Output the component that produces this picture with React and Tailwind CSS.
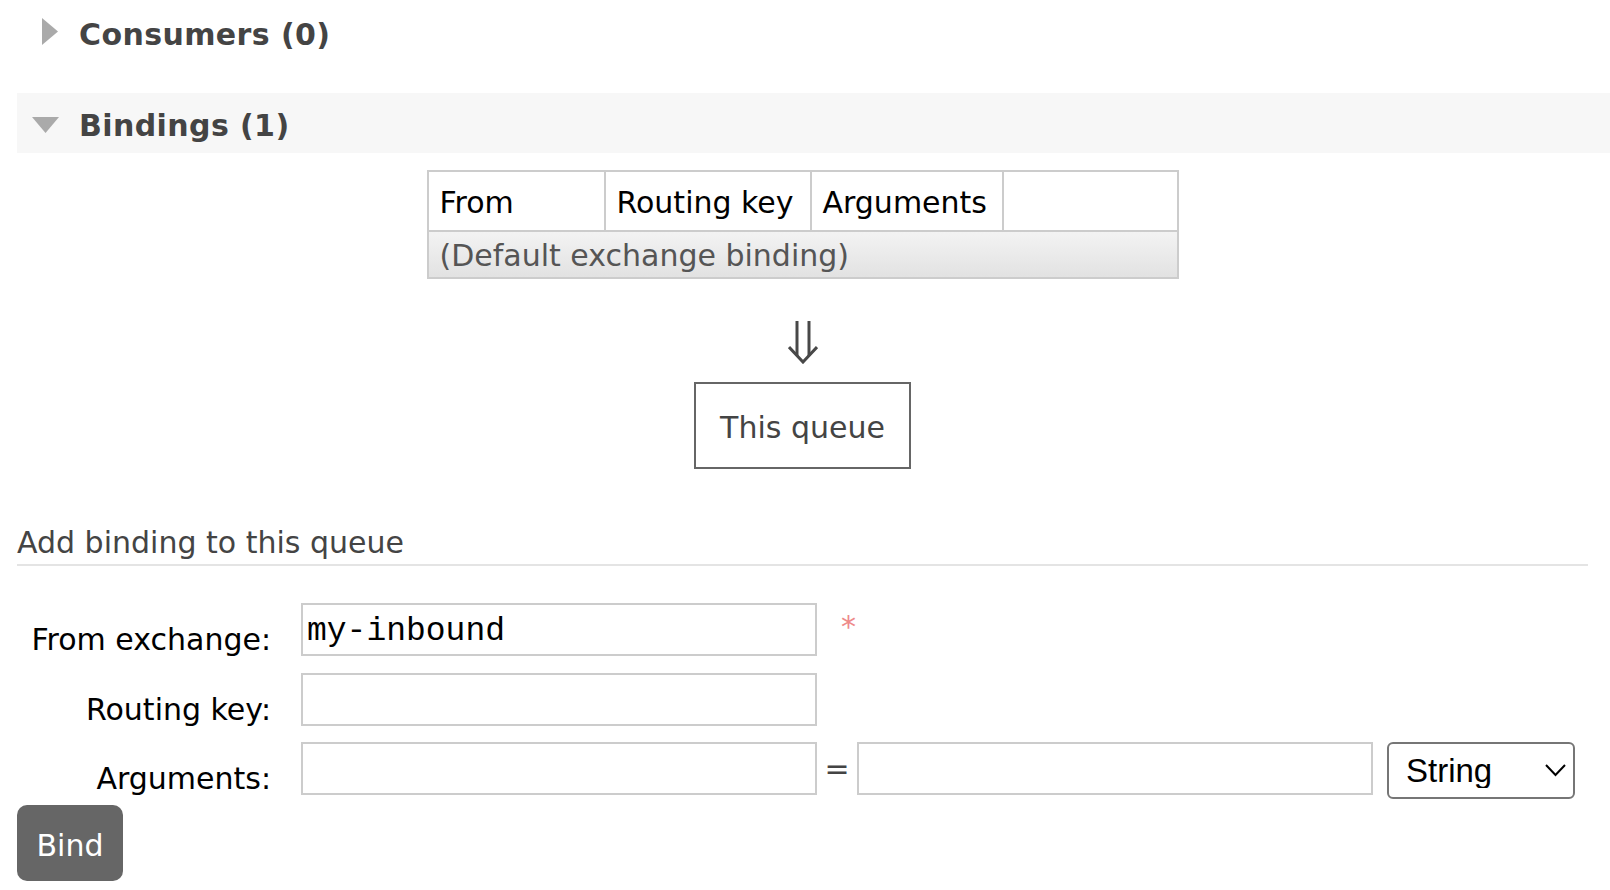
import React from 'react'

function RightTriangle() {
  return (
    <svg width="16" height="27" viewBox="0 0 16 27" className="mt-[1px] shrink-0">
      <polygon points="0,0 16,13.5 0,27" fill="#aaaaaa" />
    </svg>
  )
}

function DownTriangle() {
  return (
    <svg width="27" height="16" viewBox="0 0 27 16" className="mt-[24px] shrink-0">
      <polygon points="0,0 27,0 13.5,16" fill="#aaaaaa" />
    </svg>
  )
}

function DoubleArrow() {
  return (
    <svg width="30" height="43" viewBox="0 0 30 43" className="mx-auto block">
      <line x1="9" y1="0" x2="9" y2="35" stroke="#484848" strokeWidth="3" />
      <line x1="21" y1="0" x2="21" y2="35" stroke="#484848" strokeWidth="3" />
      <polyline points="1,26 15,41 29,26" fill="none" stroke="#484848" strokeWidth="3" />
    </svg>
  )
}

function FormRow({ label, children, className = '' }) {
  return (
    <div className={`flex items-start h-[53px] ${className}`}>
      <div className="w-[254px] shrink-0 text-right text-black pt-[19px]">{label}</div>
      <div className="ml-[30px] flex items-start">{children}</div>
    </div>
  )
}

const inputClass =
  "w-[516px] h-[53px] border-2 border-[#cccccc] bg-white pl-[4px] pt-[4px] font-['Liberation_Mono',monospace] text-[33px] text-black outline-none"

export default function App() {
  return (
    <div className="min-h-screen bg-white pl-[17px] pr-[22px] font-['DejaVu_Sans',Verdana,sans-serif] text-[30px] leading-[35px] text-[#444444]">
      {/* Consumers */}
      <div className="pt-[17px] pl-[25px] flex items-start">
        <RightTriangle />
        <span className="ml-[21px] font-bold tracking-[0.4px]">Consumers (0)</span>
      </div>

      {/* Bindings header */}
      <div className="mt-[41px] -mr-[22px] h-[60px] bg-[#f7f7f7] pl-[15px] flex items-start">
        <DownTriangle />
        <span className="ml-[20px] mt-[15px] font-bold tracking-[0.4px]">Bindings (1)</span>
      </div>

      {/* Bindings table */}
      <div className="mt-[17px] mx-auto w-[752px] border-2 border-[#cccccc]">
        <div className="flex h-[60px] border-b-2 border-[#cccccc] bg-white text-black">
          <div className="w-[175px] pl-[11px] pt-[13px]">From</div>
          <div className="w-[206px] border-l-2 border-[#cccccc] pl-[11px] pt-[13px]">Routing key</div>
          <div className="w-[192px] border-l-2 border-[#cccccc] pl-[11px] pt-[13px]">Arguments</div>
          <div className="flex-1 border-l-2 border-[#cccccc]"></div>
        </div>
        <div className="h-[45px] bg-gradient-to-b from-[#f3f3f3] to-[#e2e2e2] pl-[11px] pt-[6px] text-[#555555]">
          (Default exchange binding)
        </div>
      </div>

      <div className="mt-[42px]">
        <DoubleArrow />
      </div>

      <div className="mt-[18px] mx-auto w-[217px] h-[87px] border-2 border-[#666666] pt-[26px] text-center">
        This queue
      </div>

      {/* Add binding */}
      <h3 className="mt-[56px] pb-[4px] border-b-2 border-[#e4e4e4]">Add binding to this queue</h3>

      <div className="mt-[37px]">
        <FormRow label="From exchange:">
          <input className={inputClass} defaultValue="my-inbound" />
          <span className="ml-[24px] pt-[6px] text-[#ee8a8a]">*</span>
        </FormRow>
        <FormRow label="Routing key:" className="mt-[17px]">
          <input className={inputClass} defaultValue="" />
        </FormRow>
        <FormRow label="Arguments:" className="mt-[16px]">
          <input className={inputClass} defaultValue="" />
          <span className="w-[40px] h-[53px] flex items-center justify-center">=</span>
          <input className={inputClass} defaultValue="" />
          <div className="relative ml-[14px]">
            <select
              defaultValue="String"
              className="appearance-none w-[188px] h-[57px] rounded-[6px] border-2 border-[#767676] bg-white pl-[17px] font-['Liberation_Sans',Arial,sans-serif] text-[33px] text-black outline-none"
            >
              <option>String</option>
              <option>Number</option>
              <option>Boolean</option>
              <option>List</option>
            </select>
            <svg
              width="21"
              height="13"
              viewBox="0 0 21 13"
              className="pointer-events-none absolute right-[9px] top-[22px]"
            >
              <polyline points="1,1 10.5,11 20,1" fill="none" stroke="#000" strokeWidth="2" />
            </svg>
          </div>
        </FormRow>
      </div>

      <button className="mt-[10px] w-[106px] h-[76px] rounded-[10px] bg-[#666666] pt-[4px] text-white text-center">
        Bind
      </button>
    </div>
  )
}
